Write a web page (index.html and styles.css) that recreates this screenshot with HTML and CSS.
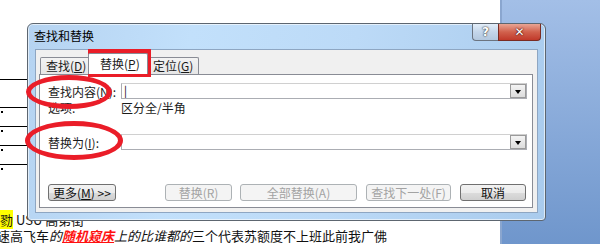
FILE: index.html
```html
<!DOCTYPE html>
<html lang="zh-CN">
<head>
    <meta charset="UTF-8">
    <title>查找和替换</title>
    <link rel="stylesheet" href="styles.css">
</head>
<body>
    <div class="page">
        <div class="doc">
            <div class="rules">
                <div class="rule first"></div>
                <div class="rule"><i class="dot"></i></div>
                <div class="rule"><i class="dot"></i></div>
                <div class="rule"><i class="dot"></i></div>
                <div class="rule"><i class="dot"></i></div>
            </div>
            <p class="line1"><span class="hl">勠</span> USU 高第街</p>
            <p class="line2">速高飞车<em>的</em><em class="red">随机窥床</em><em>上的比谁都的</em>三个代表苏额度不上班此前我广佛</p>
        </div>
        <div class="desk"></div>
    </div>

    <div class="dialog">
        <div class="titlebar">
            <span class="title">查找和替换</span>
            <span class="help">?</span>
            <span class="close">&#x2715;</span>
        </div>
        <div class="client">
            <ul class="tabs">
                <li>查找(<u>D</u>)</li>
                <li class="on">替换(<u>P</u>)</li>
                <li>定位(<u>G</u>)</li>
            </ul>
            <div class="panel">
                <div class="row">
                    <label>查找内容(<u>N</u>):</label>
                    <div class="combo"><span class="caret">|</span><span class="drop"></span></div>
                </div>
                <div class="row opts">
                    <label>选项:</label>
                    <span>区分全/半角</span>
                </div>
                <div class="row replace">
                    <label>替换为(<u>I</u>):</label>
                    <div class="combo"><span class="drop"></span></div>
                </div>
                <div class="btns">
                    <button class="more">更多(<u>M</u>) &gt;&gt;</button>
                    <button class="off b1">替换(R)</button>
                    <button class="off b2">全部替换(A)</button>
                    <button class="off b3">查找下一处(F)</button>
                    <button class="b4">取消</button>
                </div>
            </div>
        </div>
    </div>

    <!-- 红色标注 -->
    <div class="mark ring1"></div>
    <div class="mark ring2"></div>
    <div class="mark box"></div>
</body>
</html>
```

FILE: styles.css
```css
* {
    margin: 0;
    padding: 0;
    box-sizing: border-box;
}
ul {
    list-style: none;
}
body {
    width: 600px;
    height: 244px;
    overflow: hidden;
    position: relative;
    font-family: "Noto Sans CJK SC", "Liberation Sans", sans-serif;
    font-size: 12px;
    color: #1b1b1b;
}


.page {
    display: flex;
    height: 244px;
}
.doc {
    width: 500px;
    background: #fff;
    display: flex;
    flex-direction: column;
    padding-top: 79px;
}
.desk {
    flex: 1;
    background: linear-gradient(#a3bfe7, #6f96cc);
    border-left: 2px solid #8aa6cf;
}
.rules {
    width: 28px;
    height: 134px;
}
.rule {
    position: relative;
    height: 19px;
    border-top: 1px solid #000;
}
.rule.first {
    height: 28px;
}
.dot {
    position: absolute;
    left: 1px;
    top: 3px;
    width: 2px;
    height: 2px;
    background: #000;
}
.line1 {
    height: 17px;
    font-size: 13px;
    line-height: 17px;
    color: #111;
}
.hl {
    background: #ffff00;
}
.line2 {
    margin-left: -3px;
    height: 16px;
    font-size: 13px;
    line-height: 16px;
    white-space: nowrap;
    color: #111;
}
.line2 em {
    font-style: italic;
}
.line2 .red {
    color: #ff1010;
    font-weight: bold;
    text-decoration: underline;
}


.dialog {
    position: absolute;
    left: 27px;
    top: 23px;
    width: 519px;
    height: 198px;
    border: 1px solid #5d6670;
    border-radius: 6px 6px 4px 4px;
    background: linear-gradient(100deg, #b5d3f1, #c2e0fb 30%, #bcdaf7 60%, #a9cbed);
    box-shadow: inset 0 0 0 1px rgba(255, 255, 255, .6);
    display: flex;
    flex-direction: column;
}
.titlebar {
    height: 25px;
    display: flex;
    align-items: flex-start;
    padding-left: 6px;
}
.title {
    flex: 1;
    font-size: 12px;
    line-height: 24px;
    color: #000;
}
.help,
.close {
    height: 17px;
    text-align: center;
    line-height: 17px;
    border: 1px solid #6b7480;
    border-top: none;
}
.help {
    width: 26px;
    font-family: "DejaVu Sans", sans-serif;
    font-weight: bold;
    font-size: 12px;
    color: #fff;
    text-shadow: 0 0 2px #333, 0 0 1px #333;
    border-right: none;
    border-radius: 0 0 0 4px;
    background: linear-gradient(#e3eef9, #c4d6ea 50%, #b3c8de);
}
.close {
    width: 43px;
    margin-right: 4px;
    font-family: "DejaVu Sans", sans-serif;
    font-weight: bold;
    font-size: 12px;
    color: #fff;
    text-shadow: 0 0 2px #400, 0 0 1px #400;
    border-color: #7a2b22;
    border-radius: 0 0 4px 0;
    background: linear-gradient(#e9a594, #d1614d 50%, #c0392a);
}
.client {
    flex: 1;
    margin: 0 7px 7px 7px;
    background: #f0f0f0;
    border: 1px solid #8ea6c2;
    display: flex;
    flex-direction: column;
    padding: 4px 4px 4px 3px;
}


.tabs {
    display: flex;
    align-items: flex-end;
    height: 20px;
    padding-left: 1px;
}
.tabs li {
    height: 17px;
    padding: 0 5px;
    margin-right: -1px;
    line-height: 16px;
    border: 1px solid #898c95;
    border-bottom: none;
    border-radius: 2px 2px 0 0;
    background: linear-gradient(#f3f3f3, #e6e6e6);
    white-space: nowrap;
}
.tabs li:first-child {
    width: 50px;
}
.tabs li.on {
    position: relative;
    z-index: 1;
    width: 60px;
    height: 21px;
    margin: 0 -1px 0 -1px;
    padding-left: 11px;
    background: #fff;
    line-height: 19px;
}
.tabs li:last-child {
    width: 52px;
}
.panel {
    flex: 1;
    background: #fff;
    border: 1px solid #898c95;
    padding: 8px 5px 0 8px;
}
.row {
    display: flex;
    align-items: center;
    height: 16px;
}
.row label {
    width: 73px;
    white-space: nowrap;
}
.combo {
    position: relative;
    flex: 1;
    height: 16px;
    border: 1px solid #abadb3;
    border-top-color: #d0d0d0;
    background: #fff;
}
.caret {
    position: absolute;
    left: 2px;
    top: -1px;
    font-size: 11px;
    line-height: 14px;
    color: #000;
}
.drop {
    position: absolute;
    right: 0;
    top: 0;
    width: 16px;
    height: 14px;
    border: 1px solid #9a9a9a;
    background: linear-gradient(#f4f4f4, #dcdcdc);
}
.drop::after {
    content: "";
    position: absolute;
    left: 4px;
    top: 5px;
    border: 3px solid transparent;
    border-top: 4px solid #000;
    border-bottom: none;
}
.opts {
    margin-top: 1px;
    height: 14px;
}
.replace {
    margin-top: 20px;
}
.btns {
    display: flex;
    margin-top: 34px;
}
.btns button {
    height: 17px;
    font-family: inherit;
    font-size: 12px;
    line-height: 14px;
    color: #111;
    border: 1px solid #707070;
    border-radius: 3px;
    background: linear-gradient(#f2f2f2, #ebebeb 50%, #dcdcdc 51%, #cfcfcf);
    white-space: nowrap;
}
.btns .more {
    width: 68px;
}
.btns .off {
    color: #a3a3a3;
    border-color: #adb2b5;
    background: #f4f4f4;
}
.b1 {
    width: 67px;
    margin-left: 49px;
}
.b2 {
    width: 117px;
    margin-left: 8px;
}
.b3 {
    width: 85px;
    margin-left: 9px;
}
.b4 {
    width: 66px;
    margin-left: 9px;
}


.mark {
    position: absolute;
    border: 5px solid #ea1d28;
}
.ring1 {
    left: 26px;
    top: 75px;
    width: 86px;
    height: 34px;
    border-radius: 50%;
}
.ring2 {
    left: 25px;
    top: 121px;
    width: 98px;
    height: 39px;
    border-radius: 50%;
}
.box {
    left: 88px;
    top: 49px;
    width: 63px;
    height: 28px;
}
```
